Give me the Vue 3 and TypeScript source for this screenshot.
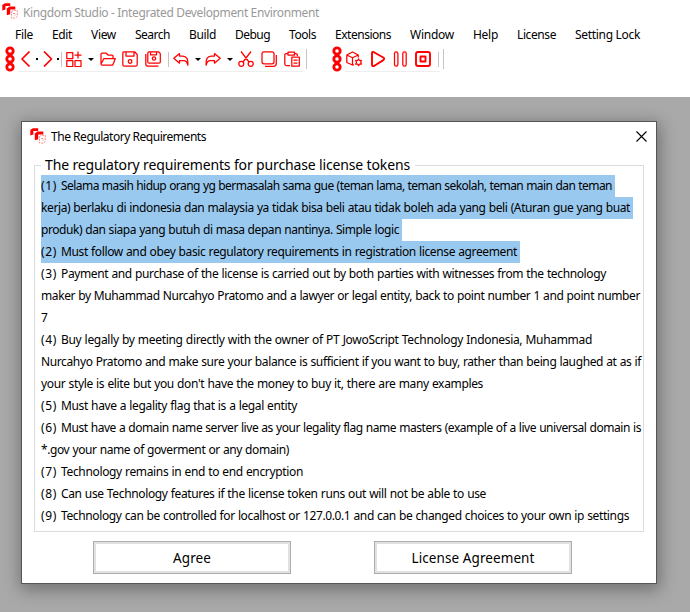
<script setup lang="ts">
import type { Directive } from 'vue'

interface Label { text: string; width: number }
interface Line extends Label { no?: number; selected?: boolean }
interface Tool { icon: string; width: number }

// Spreads the glyphs of a label so that it takes exactly the given width.
const vFit: Directive<HTMLElement, number> = {
  mounted(el, { value }) {
    const range = document.createRange()
    range.selectNodeContents(el)
    const natural = range.getBoundingClientRect().width
    const count = (el.textContent ?? '').trim().length
    el.style.letterSpacing = `${(value - natural) / count}px`
  },
}

const menus: Label[] = [
  { text: 'File', width: 18 },
  { text: 'Edit', width: 20 },
  { text: 'View', width: 25 },
  { text: 'Search', width: 35 },
  { text: 'Build', width: 27 },
  { text: 'Debug', width: 35 },
  { text: 'Tools', width: 27 },
  { text: 'Extensions', width: 56 },
  { text: 'Window', width: 44 },
  { text: 'Help', width: 25 },
  { text: 'License', width: 39 },
  { text: 'Setting Lock', width: 65 },
]

const tools: Tool[] = [
  { icon: 'grip', width: 16 },
  { icon: 'back', width: 15 },
  { icon: 'dot', width: 7 },
  { icon: 'forward', width: 14 },
  { icon: 'dot', width: 4 },
  { icon: 'sep', width: 5 },
  { icon: 'new', width: 22 },
  { icon: 'caret', width: 12 },
  { icon: 'open', width: 22 },
  { icon: 'save', width: 23 },
  { icon: 'saveAll', width: 23 },
  { icon: 'sep', width: 5 },
  { icon: 'undo', width: 22 },
  { icon: 'caret', width: 10 },
  { icon: 'redo', width: 22 },
  { icon: 'caret', width: 11 },
  { icon: 'cut', width: 23 },
  { icon: 'copy', width: 23 },
  { icon: 'paste', width: 22 },
  { icon: 'end', width: 3 },
]

const runTools: Tool[] = [
  { icon: 'grip', width: 14 },
  { icon: 'build', width: 24 },
  { icon: 'play', width: 23 },
  { icon: 'pause', width: 22 },
  { icon: 'stop', width: 23 },
  { icon: 'sep', width: 5 },
  { icon: 'end', width: 3 },
]

const paths: Record<string, string> = {
  back: 'M12.5.5 5 8l7.5 7.5',
  forward: 'M5 .5 12.5 8 5 15.5',
  new: 'M.8 1.5h6v6h-6zM.8 9.5h6v6h-6zM9 9.5h6v6H9zM12 .5v7M8.5 4h7',
  open: 'M1 13V3q0-1 1-1h4l2 2h4q1 0 1 1v2M1 13l3-5.5h11.3L12.8 14H2q-1 0-1-1',
  save: 'M1.5.8h11l2.7 2.7v10q0 1.7-1.7 1.7h-11q-1.7 0-1.7-1.7v-11Q.8.8 1.5.8zM4 1v4h8V1M6.3 10.5a1.8 1.8 0 1 0 3.6 0a1.8 1.8 0 1 0-3.6 0',
  saveAll: 'M4 .8h9.5l1.8 1.8V11q0 1.2-1.2 1.2H4Q2.8 12.2 2.8 11V2Q2.8.8 4 .8zM5.5 1v2.8h6V1M7.3 7.5a1.7 1.7 0 1 0 3.4 0a1.7 1.7 0 1 0-3.4 0M.8 3v10q0 2.2 2.2 2.2h10.5',
  undo: 'M6.5 2.5.8 7.3l5.7 4.9V9.7h4q3.5 0 4.3 4.4.8-9-5-9H6.5z',
  redo: 'M9.5 2.5l5.7 4.8-5.7 4.9V9.7h-4q-3.5 0-4.3 4.4-.8-9 5-9h3.3z',
  cut: 'M3 .5l8 10.5M13 .5 5 11M.8 12.8a2.5 2.5 0 1 0 5 0a2.5 2.5 0 1 0-5 0M10.2 12.8a2.5 2.5 0 1 0 5 0a2.5 2.5 0 1 0-5 0',
  copy: 'M3 .8h8q2 0 2 2v8q0 2-2 2H3q-2 0-2-2v-8q0-2 2-2zM15.3 4v8.5q0 2.8-2.8 2.8H4',
  paste: 'M4 2.5H2q-1.2 0-1.2 1.2V13q0 1.5 1.5 1.5H6M11 2.5h1q1.3 0 1.3 1.3V5M4 1h6.5v3H4zM7.8 6.2h7.5v9H7.8zM9.5 9.2h4M9.5 12h4',
  build: 'M8 13.8 6.5 14l-5.7-2.5V4L6.5 1l5.8 3v2.5M.8 4l5.7 2.8L12.3 4M6.5 6.8V14M12.6 8l1 1.5 1.9-.1-.8 1.9.8 1.9-1.9-.1-1 1.6-1-1.6-1.9.1.8-1.9-.8-1.9 1.9.1z',
  play: 'M2 2q0-1.4 1.5-1l9.8 5.5q1.8 1.3 0 2.6L4 15q-2 .5-2-1.5z',
  pause: 'M3.2.8q1.7 0 1.7 1.7v11q0 1.7-1.7 1.7T1.5 13.5v-11Q1.5.8 3.2.8zM11.5.8q1.7 0 1.7 1.7v11q0 1.7-1.7 1.7t-1.7-1.7v-11Q9.8.8 11.5.8z',
  stop: 'M3 1h10q2 0 2 2v10q0 2-2 2H3q-2 0-2-2V3q0-2 2-2zM5.5 5.5h5v5h-5z',
}

const logoSolid = 'M.3 2 2.8.2h5.4V3H3.4v3.4l-3.1 1zM4.8 5.4 7.5 3.6h5.8v2.8H8.2v4.8l-3.4 1z'
const logoFaint = 'M9.5 8.5l2-1.2h3.8v6l-1.8 1.8h-4zM11 10.5h2v2'

const numberWidth = 20

const lines: Line[] = [
  { no: 1, text: 'Selama masih hidup orang yg bermasalah sama gue (teman lama, teman sekolah, teman main dan teman', width: 571, selected: true },
  { text: 'kerja) berlaku di indonesia dan malaysia ya tidak bisa beli atau tidak boleh ada yang beli (Aturan gue yang buat', width: 589, selected: true },
  { text: 'produk) dan siapa yang butuh di masa depan nantinya. Simple logic', width: 358, selected: true },
  { no: 2, text: 'Must follow and obey basic regulatory requirements in registration license agreement', width: 476, selected: true },
  { no: 3, text: 'Payment and purchase of the license is carried out by both parties with witnesses from the technology', width: 565 },
  { text: 'maker by Muhammad Nurcahyo Pratomo and a lawyer or legal entity, back to point number 1 and point number', width: 599 },
  { text: '7', width: 7 },
  { no: 4, text: 'Buy legally by meeting directly with the owner of PT JowoScript Technology Indonesia, Muhammad', width: 551 },
  { text: 'Nurcahyo Pratomo and make sure your balance is sufficient if you want to buy, rather than being laughed at as if', width: 600 },
  { text: "your style is elite but you don't have the money to buy it, there are many examples", width: 442 },
  { no: 5, text: 'Must have a legality flag that is a legal entity', width: 256 },
  { no: 6, text: 'Must have a domain name server live as your legality flag name masters (example of a live universal domain is', width: 600 },
  { text: '*.gov your name of goverment or any domain)', width: 248 },
  { no: 7, text: 'Technology remains in end to end encryption', width: 262 },
  { no: 8, text: 'Can use Technology features if the license token runs out will not be able to use', width: 445 },
  { no: 9, text: 'Technology can be controlled for localhost or 127.0.0.1 and can be changed choices to your own ip settings', width: 588 },
]
</script>

<template>
  <main class="app">
    <header class="chrome">
      <div class="titlebar">
        <svg class="logo" viewBox="0 0 16 16"><path :d="logoSolid" fill="red" /><path :d="logoFaint" class="faint" /></svg>
        <span v-fit="296">Kingdom Studio - Integrated Development Environment</span>
      </div>
      <nav class="menubar">
        <span v-for="m in menus" :key="m.text" class="menu" :style="{ width: m.width + 'px' }"><span v-fit="m.width">{{ m.text }}</span></span>
      </nav>
      <div class="toolbars">
        <div v-for="(bar, b) in [tools, runTools]" :key="b" class="toolbar">
          <span v-for="(t, i) in bar" :key="i" class="tool" :style="{ width: t.width + 'px' }">
            <svg v-if="t.icon === 'grip'" class="grip" viewBox="0 0 10 26"><circle cx="5" cy="5" r="3.2" /><circle cx="5" cy="13" r="3.2" /><circle cx="5" cy="21" r="3.2" /></svg>
            <i v-else-if="t.icon === 'dot'" class="dot" />
            <i v-else-if="t.icon === 'caret'" class="caret" />
            <i v-else-if="t.icon === 'sep'" class="sep" />
            <i v-else-if="t.icon === 'end'" class="sep end" />
            <svg v-else class="icon" :class="t.icon" viewBox="0 0 16 16"><path :d="paths[t.icon]" /></svg>
          </span>
        </div>
      </div>
    </header>

    <section class="workspace">
      <div class="dialog">
        <div class="dialog-title">
          <svg class="logo" viewBox="0 0 16 16"><path :d="logoSolid" fill="red" /><path :d="logoFaint" class="faint" /></svg>
          <span v-fit="155">The Regulatory Requirements</span>
          <svg class="close" viewBox="0 0 11 11"><path d="M.5.5l10 10M10.5.5l-10 10" /></svg>
        </div>
        <fieldset class="group">
          <legend><span v-fit="365">The regulatory requirements for purchase license tokens</span></legend>
          <div v-for="(l, i) in lines" :key="i" class="line">
            <span class="run" :class="{ selected: l.selected }">
              <span v-if="l.no" class="number"><span v-fit="16">({{ l.no }})</span></span>
              <span v-fit="l.no ? l.width - numberWidth : l.width">{{ l.text }}</span>
            </span>
          </div>
        </fieldset>
        <div class="actions">
          <button><span v-fit="38">Agree</span></button>
          <button><span v-fit="123">License Agreement</span></button>
        </div>
      </div>
    </section>
  </main>
</template>

<style>
body { margin: 0; overflow: hidden; }
</style>

<style scoped>
.app { width: 690px; height: 612px; background: #a9a9a9; font: 12px "Noto Sans", "Open Sans", sans-serif; color: #000; overflow: hidden; white-space: nowrap; }
.chrome { height: 97px; background: #fff; }
.titlebar { display: flex; align-items: center; height: 24px; padding-left: 2px; gap: 5px; color: #999; }
.titlebar .logo { margin-top: -2px; }
.logo { width: 16px; height: 16px; flex: none; }
.faint { fill: none; stroke: #ff8b8b; stroke-width: 1; stroke-dasharray: 2 1; }
.menubar { display: flex; gap: 19px; height: 22px; padding-left: 15px; align-items: center; }
.menu { flex: none; margin-top: -1px; }
.toolbars { display: flex; gap: 23px; padding-left: 5px; height: 27px; }
.toolbar { display: flex; height: 26px; background: linear-gradient(#eee, #eee) 13px 100% / calc(100% - 19px) 1px no-repeat; }
.tool { display: flex; align-items: center; flex: none; }
.tool svg { fill: none; stroke: #f00; flex: none; }
.tool .grip { width: 10px; height: 26px; stroke-width: 2.8; }
.tool .icon { width: 16px; height: 16px; stroke-width: 1.25; stroke-linejoin: round; }
.tool .back, .tool .forward { stroke-width: 1.7; margin-left: -4px; }
.tool .play, .tool .stop { stroke-width: 1.9; }
.dot { width: 2px; height: 2px; background: #000; }
.caret { border: 3px solid transparent; border-top-color: #000; border-bottom: 0; }
.sep { width: 1px; height: 15px; background: #c4c4c4; }
.end { height: 20px; }
.workspace { padding: 24px 0 0 21px; }
.dialog { box-sizing: border-box; width: 636px; height: 463px; border: 1px solid #555; background: #fff; box-shadow: 1px 4px 16px 2px rgba(0, 0, 0, .33); }
.dialog-title { display: flex; align-items: center; gap: 5px; height: 28px; padding: 0 9px 0 8px; }
.close { width: 11px; height: 11px; margin-left: auto; fill: none; stroke: #000; stroke-width: 1.1; }
.group { box-sizing: border-box; width: 610px; min-width: 0; height: 376px; margin: 6px 0 0 12px; padding: 0 0 0 6px; border: 1px solid #dcdcdc; }
legend { box-sizing: border-box; width: 374px; height: 19px; padding: 0 0 0 4px; font-size: 14px; line-height: 18px; }
.line { height: 22px; line-height: 22px; word-spacing: .4px; }
.run { display: inline-flex; height: 22px; padding-right: 3px; vertical-align: top; }
.number { width: 20px; flex: none; }
.selected { background: #99c9ef; }
.actions { display: flex; gap: 83px; padding: 9px 0 0 71px; }
button { box-sizing: border-box; width: 198px; height: 33px; padding: 0; border: 1px solid #adadad; box-shadow: inset 0 0 0 2px #e1e1e1; background: #fff; font: 13.5px "Noto Sans", sans-serif; color: #000; }
</style>
